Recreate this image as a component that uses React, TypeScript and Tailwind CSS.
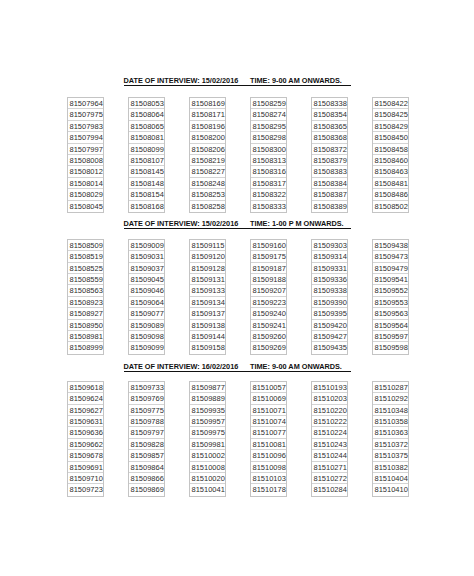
import React from "react";

type Section = {
  date: string;
  time: string;
  cols: string[][];
  headerMt: string;
  tableMt: string;
};

const sections: Section[] = [
  {
    date: "15/02/2016",
    time: "9-00 AM ONWARDS.",
    headerMt: "mt-[75px]",
    tableMt: "mt-[11px]",
    cols: [
      ["81507964", "81507975", "81507983", "81507994", "81507997", "81508008", "81508012", "81508014", "81508029", "81508045"],
      ["81508053", "81508064", "81508065", "81508081", "81508099", "81508107", "81508145", "81508148", "81508154", "81508168"],
      ["81508169", "81508171", "81508196", "81508200", "81508206", "81508219", "81508227", "81508248", "81508253", "81508258"],
      ["81508259", "81508274", "81508295", "81508298", "81508300", "81508313", "81508316", "81508317", "81508322", "81508333"],
      ["81508338", "81508354", "81508365", "81508368", "81508372", "81508379", "81508383", "81508384", "81508387", "81508389"],
      ["81508422", "81508425", "81508429", "81508450", "81508458", "81508460", "81508463", "81508481", "81508486", "81508502"],
    ],
  },
  {
    date: "15/02/2016",
    time: "1-00 P M ONWARDS.",
    headerMt: "mt-[6px]",
    tableMt: "mt-[10px]",
    cols: [
      ["81508509", "81508519", "81508525", "81508559", "81508563", "81508923", "81508927", "81508950", "81508981", "81508999"],
      ["81509009", "81509031", "81509037", "81509045", "81509046", "81509064", "81509077", "81509089", "81509098", "81509099"],
      ["81509115", "81509120", "81509128", "81509131", "81509133", "81509134", "81509137", "81509138", "81509144", "81509158"],
      ["81509160", "81509175", "81509187", "81509188", "81509207", "81509223", "81509240", "81509241", "81509260", "81509269"],
      ["81509303", "81509314", "81509331", "81509336", "81509338", "81509390", "81509395", "81509420", "81509427", "81509435"],
      ["81509438", "81509473", "81509479", "81509541", "81509552", "81509553", "81509563", "81509564", "81509597", "81509598"],
    ],
  },
  {
    date: "16/02/2016",
    time: "9-00 AM ONWARDS.",
    headerMt: "mt-[7px]",
    tableMt: "mt-[9px]",
    cols: [
      ["81509618", "81509624", "81509627", "81509631", "81509636", "81509662", "81509678", "81509691", "81509710", "81509723"],
      ["81509733", "81509769", "81509775", "81509788", "81509797", "81509828", "81509857", "81509864", "81509866", "81509869"],
      ["81509877", "81509889", "81509935", "81509957", "81509975", "81509981", "81510002", "81510008", "81510020", "81510041"],
      ["81510057", "81510069", "81510071", "81510074", "81510077", "81510081", "81510096", "81510098", "81510103", "81510178"],
      ["81510193", "81510203", "81510220", "81510222", "81510224", "81510243", "81510244", "81510271", "81510272", "81510284"],
      ["81510287", "81510292", "81510348", "81510358", "81510363", "81510372", "81510375", "81510382", "81510404", "81510410"],
    ],
  },
];

function Column({ items }: { items: string[] }) {
  return (
    <div className="w-[37px] border border-[#c4c4c4] flex flex-col">
      {items.map((n, i) => (
        <div
          key={n}
          className={
            "h-[11.4px] leading-[11px] pl-[1.5px] text-[7.5px] text-[#2e2e2e] whitespace-nowrap " +
            (i < items.length - 1 ? "border-b border-[#d4d4d4]" : "")
          }
        >
          {n}
        </div>
      ))}
    </div>
  );
}

export default function App() {
  return (
    <div
      className="w-[474px] h-[576px] bg-white overflow-hidden"
      style={{ fontFamily: '"Liberation Sans", Arial, sans-serif' }}
    >
      <div className="pt-px" />
      {sections.map((s, idx) => (
        <div key={idx}>
          <div className={s.headerMt + " ml-[123.5px] w-[227px] h-[10px] border-b border-[#111] flex items-start text-[7.3px] leading-[9px] font-bold text-[#111] whitespace-nowrap"}>
            <span className="w-[126.5px]">DATE OF INTERVIEW: {s.date}</span>
            <span className="w-[22px]">TIME:</span>
            <span>{s.time}</span>
          </div>
          <div className={s.tableMt + " ml-[67px] flex gap-[24px]"}>
            {s.cols.map((c, i) => (
              <Column key={i} items={c} />
            ))}
          </div>
        </div>
      ))}
    </div>
  );
}
